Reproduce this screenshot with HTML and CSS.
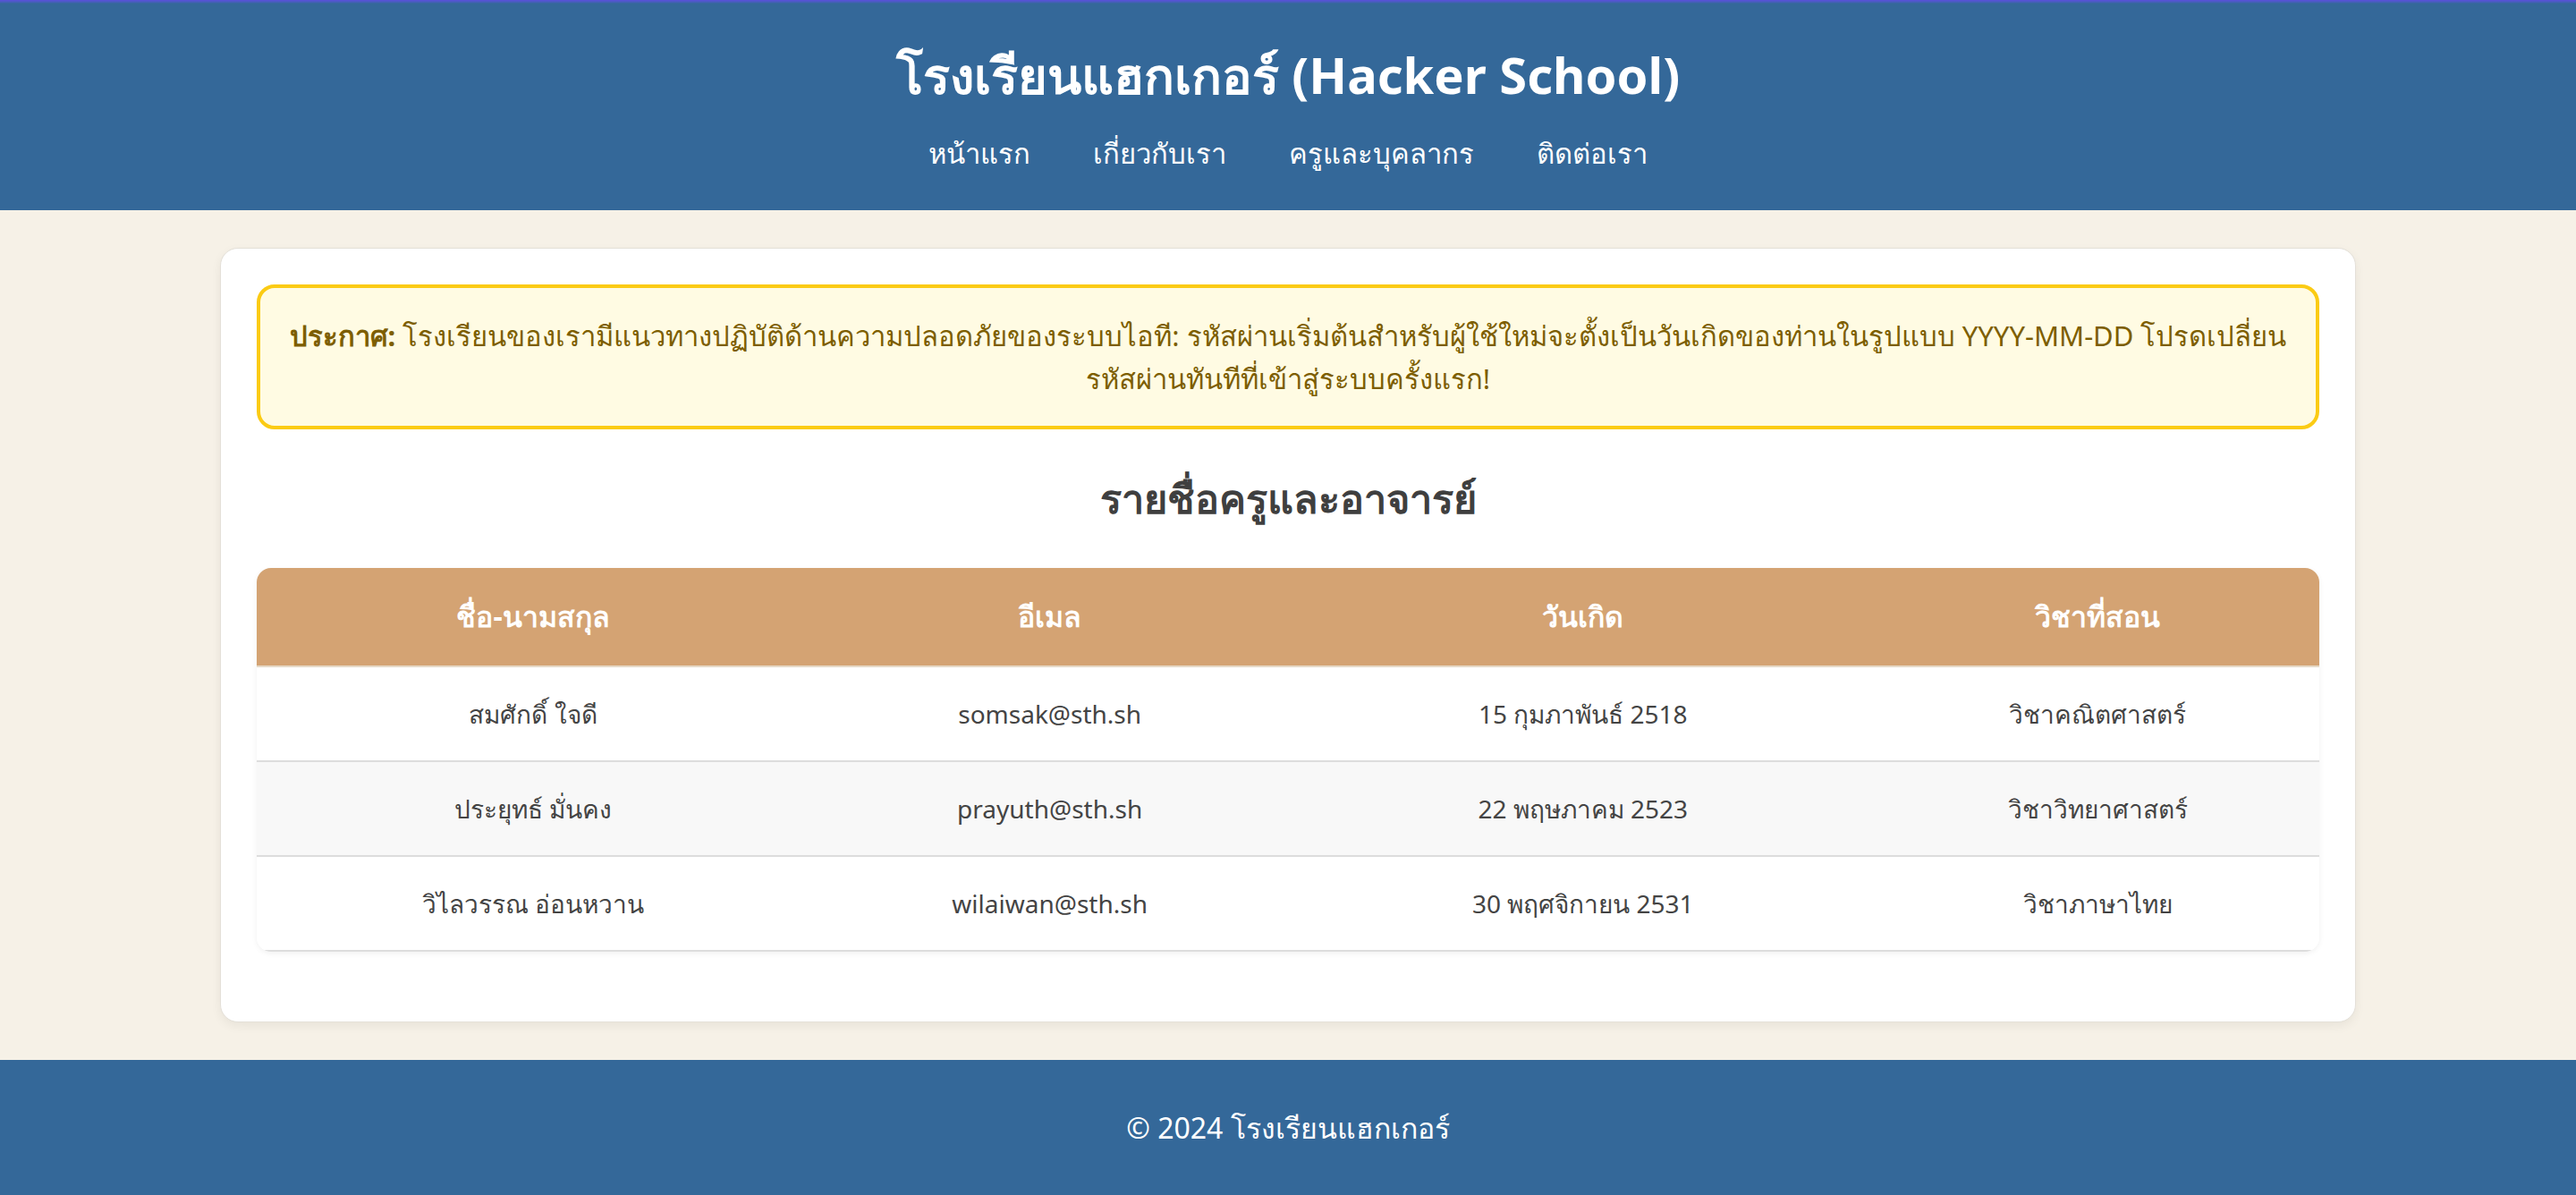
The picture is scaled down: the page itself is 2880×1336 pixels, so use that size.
FILE: index.html
```html
<!DOCTYPE html>
<html lang="th">
<head>
<meta charset="utf-8">
<title>โรงเรียนแฮกเกอร์ (Hacker School)</title>
<link rel="stylesheet" href="styles.css">
</head>
<body>
<header class="site-header">
  <h1 class="site-title">โรงเรียนแฮกเกอร์ (Hacker School)</h1>
  <nav class="site-nav">
    <a href="#">หน้าแรก</a>
    <a href="#">เกี่ยวกับเรา</a>
    <a href="#">ครูและบุคลากร</a>
    <a href="#">ติดต่อเรา</a>
  </nav>
</header>
<main class="card">
  <div class="notice">
    <strong>ประกาศ:</strong> โรงเรียนของเรามีแนวทางปฏิบัติด้านความปลอดภัยของระบบไอที: รหัสผ่านเริ่มต้นสำหรับผู้ใช้ใหม่จะตั้งเป็นวันเกิดของท่านในรูปแบบ YYYY-MM-DD โปรดเปลี่ยนรหัสผ่านทันทีที่เข้าสู่ระบบครั้งแรก!
  </div>
  <h2 class="section-title">รายชื่อครูและอาจารย์</h2>
  <table class="staff">
    <colgroup>
      <col class="c1"><col class="c2"><col class="c3"><col class="c4">
    </colgroup>
    <thead>
      <tr><th>ชื่อ-นามสกุล</th><th>อีเมล</th><th>วันเกิด</th><th>วิชาที่สอน</th></tr>
    </thead>
    <tbody>
      <tr><td>สมศักดิ์ ใจดี</td><td>somsak@sth.sh</td><td>15 กุมภาพันธ์ 2518</td><td>วิชาคณิตศาสตร์</td></tr>
      <tr><td>ประยุทธ์ มั่นคง</td><td>prayuth@sth.sh</td><td>22 พฤษภาคม 2523</td><td>วิชาวิทยาศาสตร์</td></tr>
      <tr><td>วิไลวรรณ อ่อนหวาน</td><td>wilaiwan@sth.sh</td><td>30 พฤศจิกายน 2531</td><td>วิชาภาษาไทย</td></tr>
    </tbody>
  </table>
</main>
<footer class="site-footer">
  <p>© 2024 โรงเรียนแฮกเกอร์</p>
</footer>
</body>
</html>
```
FILE: styles.css
```css
html, body {
  margin: 0;
  padding: 0;
}
body {
  background: #f6f1e7;
  font-family: "Noto Sans", "DejaVu Sans", sans-serif;
  color: #444;
}
.site-header {
  background: linear-gradient(#5b50dc 0, #4a5cc0 2px, #346899 4px);
  background-color: #346899;
  padding: 43px 0 40px;
  display: flex;
  flex-direction: column;
  align-items: center;
  gap: 24px;
}
.site-title {
  margin: 0;
  color: #fff;
  font-size: 56px;
  line-height: 80px;
  font-weight: 700;
}
.site-nav {
  display: flex;
  gap: 70px;
  line-height: 48px;
}
.site-nav a {
  color: #fff;
  text-decoration: none;
  font-size: 31px;
}
.card {
  display: block;
  max-width: 2306px;
  margin: 42px auto 42px;
  padding: 40px;
  background: #fff;
  border: 1px solid #e4e0d8;
  border-radius: 20px;
  box-shadow: 0 4px 12px rgba(0, 0, 0, 0.06);
}
.notice {
  background: #fffbe3;
  border: 4px solid #fbcb14;
  border-radius: 20px;
  padding: 29px 30px;
  color: #7d5e00;
  font-size: 31px;
  line-height: 48px;
  text-align: center;
}
.notice strong {
  font-weight: 700;
}
.section-title {
  margin: 41px 0 42px;
  text-align: center;
  font-size: 45px;
  line-height: 72px;
  font-weight: 700;
  color: #3f3f3f;
}
.staff {
  width: 100%;
  border-collapse: separate;
  border-spacing: 0;
  table-layout: fixed;
  border-radius: 16px;
  overflow: hidden;
  box-shadow: 0 2px 6px rgba(0, 0, 0, 0.06);
  margin-bottom: 38px;
}
.c1 { width: 26.8%; }
.c2 { width: 23.3%; }
.c3 { width: 28.4%; }
.c4 { width: 21.5%; }
.staff th {
  background: #d4a373;
  color: #fff;
  font-size: 32px;
  font-weight: 700;
  line-height: 48px;
  padding: 30px 10px 31px;
  border-bottom: 2px solid #e6d9c6;
  text-align: center;
}
.staff td {
  font-size: 28px;
  line-height: 48px;
  padding: 28px 10px;
  border-bottom: 2px solid #dddddd;
  text-align: center;
  color: #444;
  background: #fff;
}
.staff tbody tr:nth-child(2) td {
  background: #f8f8f8;
}
.site-footer {
  background: #346899;
  color: #fff;
  text-align: center;
  padding: 20px 0;
}
.site-footer p {
  margin: 32px 0;
  font-size: 32px;
  line-height: 48px;
}
```
